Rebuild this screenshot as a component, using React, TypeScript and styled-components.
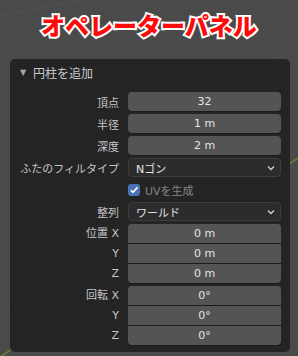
import styled, { createGlobalStyle } from "styled-components";

const GlobalStyle = createGlobalStyle`
  html, body {
    margin: 0;
    padding: 0;
    background: #4a4a4a;
  }
  * {
    box-sizing: border-box;
  }
`;

const Viewport = styled.div`
  position: relative;
  width: 298px;
  height: 356px;
  overflow: hidden;
  background: #4a4a4a;
  font-family: "DejaVu Sans", "Noto Sans CJK JP", sans-serif;
`;

const Backdrop = styled.svg`
  position: absolute;
  inset: 0;
`;

const Content = styled.div`
  position: relative;
  display: flex;
  flex-direction: column;
  height: 100%;
`;

const Title = styled.h1`
  margin: 0;
  height: 59px;
  display: flex;
  align-items: center;
  justify-content: center;
  padding-bottom: 11px;
  padding-left: 0;
  font-family: "Noto Sans CJK JP", sans-serif;
  font-weight: 900;
  font-size: 24px;
  letter-spacing: 0px;
  color: #ff0a0a;
  -webkit-text-stroke: 4px #ffffff;
  paint-order: stroke fill;
`;

const Panel = styled.section`
  margin: 0 8px 0 10px;
  width: 280px;
  height: 293px;
  background: #242424;
  border-radius: 5px;
  padding: 0 9px 7px 10px;
`;

const Header = styled.div`
  height: 25px;
  display: flex;
  align-items: center;
  gap: 6px;
  padding-top: 1px;
  color: #c8c8c8;
  font-size: 12px;
`;

const Arrow = styled.span`
  font-size: 8px;
  color: #a8a8a8;
  width: 7px;
  margin-top: 1px;
`;

const Body = styled.div`
  display: flex;
  flex-direction: column;
  gap: 3px;
  padding-top: 8px;
`;

const Row = styled.div`
  display: grid;
  grid-template-columns: 99px 153px;
  column-gap: 9px;
  height: 19px;
  align-items: center;
`;

const Label = styled.span`
  text-align: right;
  font-size: 11px;
  color: #c6c6c6;
  white-space: nowrap;
`;

const Field = styled.div<{ $pos?: "top" | "mid" | "bottom" }>`
  height: 19px;
  background: #545454;
  color: #e4e4e4;
  font-size: 11px;
  display: flex;
  align-items: center;
  justify-content: center;
  border-radius: ${(p) =>
    p.$pos === "top"
      ? "4px 4px 0 0"
      : p.$pos === "mid"
      ? "0"
      : p.$pos === "bottom"
      ? "0 0 4px 4px"
      : "4px"};
  box-shadow: 0 1px 0 #1c1c1c;
`;

const Group = styled.div`
  display: flex;
  flex-direction: column;
  gap: 1px;
  background: #464646;
  border-radius: 4px;
`;

const GroupRow = styled(Row)`
  height: 19px;
`;

const GroupWrap = styled.div`
  display: grid;
  grid-template-columns: 99px 153px;
  column-gap: 9px;
`;

const GroupLabels = styled.div`
  display: flex;
  flex-direction: column;
  gap: 1px;
`;

const GroupLabel = styled(Label)`
  height: 19px;
  line-height: 19px;
`;

const Dropdown = styled.div`
  height: 19px;
  background: #2c2c2c;
  border: 1px solid #3c3c3c;
  border-radius: 4px;
  color: #e4e4e4;
  font-size: 11px;
  display: flex;
  align-items: center;
  justify-content: space-between;
  padding: 0 5px 0 7px;
`;

const Check = styled.div`
  display: flex;
  align-items: center;
  gap: 5px;
  font-size: 11px;
  color: #858585;
`;

const Box = styled.span`
  width: 12px;
  height: 12px;
  border-radius: 3px;
  background: #4772b3;
  display: flex;
  align-items: center;
  justify-content: center;
`;

function Chevron() {
  return (
    <svg width="8" height="6" viewBox="0 0 8 6">
      <path d="M1 1.5 L4 4.5 L7 1.5" fill="none" stroke="#d0d0d0" strokeWidth="1.4" />
    </svg>
  );
}

function CheckMark() {
  return (
    <svg width="10" height="10" viewBox="0 0 10 10">
      <path d="M1.8 5.2 L4 7.4 L8.4 2.4" fill="none" stroke="#ffffff" strokeWidth="1.6" />
    </svg>
  );
}

function FieldGroup({ name, values }: { name: string; values: string[] }) {
  return (
    <GroupWrap>
      <GroupLabels>
        <GroupLabel>{name} X</GroupLabel>
        <GroupLabel>Y</GroupLabel>
        <GroupLabel>Z</GroupLabel>
      </GroupLabels>
      <Group>
        {values.map((v, i) => (
          <Field key={i} $pos={i === 0 ? "top" : i === values.length - 1 ? "bottom" : "mid"}>
            {v}
          </Field>
        ))}
      </Group>
    </GroupWrap>
  );
}

export default function App() {
  return (
    <>
      <GlobalStyle />
      <Viewport>
        <Backdrop width="298" height="356" viewBox="0 0 298 356">
          <g stroke="#525252" strokeWidth="1" fill="none">
            <line x1="0" y1="16" x2="80" y2="0" />
            <line x1="60" y1="56" x2="0" y2="30" />
            <line x1="230" y1="0" x2="298" y2="40" />
            <line x1="298" y1="50" x2="270" y2="62" />
            <line x1="0" y1="300" x2="10" y2="306" />
          </g>
          <line x1="0" y1="357" x2="298" y2="158" stroke="#5d8a2b" strokeWidth="1.5" />
        </Backdrop>
        <Content>
          <Title>オペレーターパネル</Title>
          <Panel>
            <Header>
              <Arrow>▼</Arrow>
              円柱を追加
            </Header>
            <Body>
              <Row>
                <Label>頂点</Label>
                <Field>32</Field>
              </Row>
              <Row>
                <Label>半径</Label>
                <Field>1 m</Field>
              </Row>
              <Row>
                <Label>深度</Label>
                <Field>2 m</Field>
              </Row>
              <Row>
                <Label>ふたのフィルタイプ</Label>
                <Dropdown>
                  Nゴン
                  <Chevron />
                </Dropdown>
              </Row>
              <Row>
                <span />
                <Check>
                  <Box>
                    <CheckMark />
                  </Box>
                  UVを生成
                </Check>
              </Row>
              <GroupRow>
                <Label>整列</Label>
                <Dropdown>
                  ワールド
                  <Chevron />
                </Dropdown>
              </GroupRow>
              <FieldGroup name="位置" values={["0 m", "0 m", "0 m"]} />
              <FieldGroup name="回転" values={["0°", "0°", "0°"]} />
            </Body>
          </Panel>
        </Content>
      </Viewport>
    </>
  );
}
